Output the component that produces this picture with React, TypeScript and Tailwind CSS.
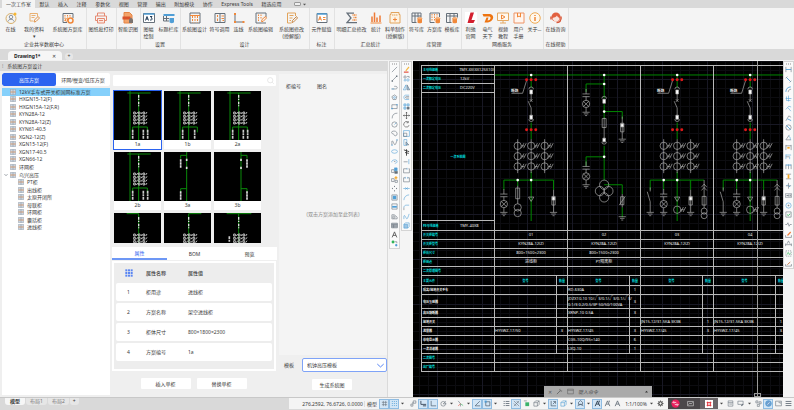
import { Fragment, useState } from 'react';
import type { ReactNode } from 'react';

const O = '#f0883a';
const G = '#66707a';
const B = '#4f9ed6';

function Ic({ children, className = 'size-[12px]' }: { children: ReactNode; className?: string }) {
  return (
    <svg viewBox="0 0 24 24" className={`${className} shrink-0`} fill="none" stroke={G} strokeWidth={2} aria-hidden="true">
      {children}
    </svg>
  );
}

const menus = ['一次工作室', '默认', '插入', '注释', '参数化', '视图', '管理', '输出', '附加模块', '协作', 'Express Tools', '精选应用'];

const db = (
  <>
    <path d="M13 13v8c0 2 9 2 9 0v-8" fill={O} stroke="none" />
    <ellipse cx="17.500" cy="13" rx="4.500" ry="2" fill="#f8b27a" stroke={O} strokeWidth={1} />
  </>
);

type RibbonItem = { lines: string[]; w: string; icon: ReactNode };
type RibbonGroup = { title: string; items: RibbonItem[] };

const ribbon: RibbonGroup[] = [
  {
    title: '企业共享数据中心',
    items: [
      {
        lines: ['在线'], w: 'w-[17px]',
        icon: <><circle cx="12" cy="13" r="10" stroke="#d9b06a" /><circle cx="12" cy="10" r="3.500" stroke="#8a93a0" /><path d="M6 19c1-6 11-6 12 0" stroke="#8a93a0" /><circle cx="20" cy="4" r="3" fill="#f7b733" stroke="none" /></>,
      },
      {
        lines: ['我的资料', '▾'], w: 'w-[30px]',
        icon: <><path d="M19 9V3H4v15h6" stroke="#e9b173" /><path d="M7 7h8M7 11h6" stroke="#e9b173" /><path d="M12 20l1-4 7-7 3 3-7 7z" stroke="#e0924a" /></>,
      },
      {
        lines: ['系统图方案库'], w: 'w-[37px]',
        icon: <><path d="M2 3h20v9M2 3v18h8" stroke={G} /><path d="M6 6v12M11 6v7M16 6v5" stroke={O} strokeDasharray="3 2" /><circle cx="17" cy="17" r="5" stroke={O} strokeWidth={3} /><circle cx="9" cy="16" r="2.500" stroke={O} /></>,
      },
    ],
  },
  {
    title: '',
    items: [{
      lines: ['图纸批打印'], w: 'w-[30px]',
      icon: <><path d="M5 8V2h14v6M5 17H1V8h22v9h-4" stroke="#e58a72" /><path d="M5 13h14v9H5z" stroke="#e58a72" fill="#fbe9e3" /><path d="M8 17h8" stroke="#e58a72" /></>,
    }],
  },
  {
    title: '',
    items: [{
      lines: ['智能识图'], w: 'w-[24px]',
      icon: <><path d="M4 1h11l5 5v16H4z" fill="#f3a46b" stroke="#e58445" /><path d="M1 9h16v6H1z" fill="#d9532c" stroke="none" /><path d="M14 15l4-4 4 4v7h-8z" fill="#7b7370" stroke="none" /></>,
    }],
  },
  {
    title: '设置',
    items: [
      {
        lines: ['图幅', '绘制'], w: 'w-[17px]',
        icon: <><path d="M1 3h22v18H1z" fill="#fff" /><path d="M1 4h22" stroke={B} strokeWidth={3} /><path d="M5 17l3-8 3 8M6 14h4M14 9h4l-2 3c4 0 3 5-2 4" stroke="#27405a" /></>,
      },
      {
        lines: ['标题栏库'], w: 'w-[23px]',
        icon: <><path d="M1 4h22v4H1z" fill={B} stroke="none" /><path d="M1 8v10h11M1 13h11M7 8v10" /><path d="M13 12v8c0 3 9 3 9 0v-8z" fill={B} stroke="none" /></>,
      },
    ],
  },
  {
    title: '设计',
    items: [
      {
        lines: ['系统图设计'], w: 'w-[29px]',
        icon: <><path d="M2 2h20v20H2z" /><path d="M2 7h20" stroke={O} /><path d="M7 8v13M12 8v13M17 8v13" stroke={O} strokeDasharray="4 2" /></>,
      },
      {
        lines: ['符号调用'], w: 'w-[21px]',
        icon: <><path d="M2 3h20v18H2zM12 3v18" /><path d="M7 6v4M7 13v5M15 8h5M15 13h5M17 17h3" stroke={O} /></>,
      },
      { lines: ['连线'], w: 'w-[17px]', icon: <><path d="M4 3v17h17" stroke={G} /><path d="M2 2h4v4H2zM2 18h4v4H2zM19 18h4v4h-4z" fill={O} stroke="none" /></> },
      {
        lines: ['系统图编辑'], w: 'w-[27px]',
        icon: <><path d="M2 2h20v8M2 2v20h20" /><path d="M7 5v13M12 5v9" stroke={O} strokeDasharray="3 2" /><path d="M13 19l1-4 7-6 2 3-7 7z" stroke={O} /></>,
      },
      {
        lines: ['系统图修改', '(授解版)'], w: 'w-[35px]',
        icon: <><path d="M19 8V2H3v20h8" stroke="#e2a45c" /><path d="M7 7h8M7 12h6M7 17h3" stroke="#e2a45c" /><path d="M12 21l1-4 8-8 2 3-8 8z" stroke="#c98a4a" /></>,
      },
    ],
  },
  {
    title: '标注',
    items: [{
      lines: ['元件赋值'], w: 'w-[25px]',
      icon: <><path d="M2 3h20v18H2z" fill="#fff" /><path d="M2 4h20" strokeWidth={3} stroke={B} /><path d="M5 17l3-8 3 8M6 14h4M14 11h5M14 15h5" stroke={O} /></>,
    }],
  },
  {
    title: '汇总统计',
    items: [
      {
        lines: ['明细汇总修改'], w: 'w-[35px]',
        icon: <><path d="M16 2H2l8 10-8 9h20" stroke={G} strokeWidth={2.5} /><path d="M13 6h9M15 11h7M13 16h9" stroke={O} strokeDasharray="2 1" strokeWidth={3} /></>,
      },
      { lines: ['统计'], w: 'w-[14px]', icon: <><path d="M1 22h22" stroke={O} /><path d="M4 20V9M9 20V1M14 20V11M20 20V7" stroke="#ee7a35" strokeWidth={3} /></> },
      {
        lines: ['料单制作', '(授解版)'], w: 'w-[24px]',
        icon: <><path d="M4 1h16v4h2v17H2V5h2z" stroke="#e2a45c" fill="#fdf3e4" /><path d="M6 6h12" stroke="#e2a45c" strokeDasharray="3 1" /><path d="M12 11v8M8 15h8" stroke={O} /></>,
      },
    ],
  },
  {
    title: '库管理',
    items: [
      { lines: ['符号库'], w: 'w-[19px]', icon: <><path d="M2 2h18v9M2 2v19h9M2 8h18M8 2v19M14 2v9" />{db}</> },
      { lines: ['方案库'], w: 'w-[17px]', icon: <><path d="M2 2h19v8M2 2v19h9" /><path d="M6 4v15M11 4v15M16 4v6" stroke={O} strokeDasharray="3 2" />{db}</> },
      { lines: ['模板库'], w: 'w-[18px]', icon: <><path d="M1 3h22v8M1 3v18h10M1 8h22M8 3v18M16 3v8" />{db}</> },
    ],
  },
  {
    title: '网络服务',
    items: [
      { lines: ['利驰', '官网'], w: 'w-[19px]', icon: <><rect width="24" height="24" fill="#fff" stroke="none" /><path d="M11 1h7l-5 15h7l-3 6H5z" fill="#d3202f" stroke="none" /></> },
      { lines: ['电气', '天下'], w: 'w-[15px]', icon: <path d="M1 4h15c10 1 8 16-5 17H5l4-10h4l-2 6c7 0 8-8 3-8H3z" fill="#ee7410" stroke="none" /> },
      { lines: ['视频', '教程'], w: 'w-[16px]', icon: <><path d="M1 2h22v15H1z" stroke="#e5a862" fill="#fff8ee" /><path d="M9 6l7 4-7 4z" stroke={O} /><path d="M12 17v5M6 22h12" stroke="#e5a862" /></> },
      { lines: ['用户', '手册'], w: 'w-[15px]', icon: <><path d="M2 2h20v20H2z" stroke="#ee9467" fill="#fff5ef" /><path d="M9 2v8l3-2 3 2V2" stroke={O} /></> },
      { lines: ['关于…'], w: 'w-[17px]', icon: <><circle cx="12" cy="12" r="10.500" stroke="#eeaa55" fill="#fff8ee" /><path d="M12 6v2M12 10v8" stroke={O} strokeWidth={3} /></> },
    ],
  },
  {
    title: '在线帮助',
    items: [{
      lines: ['在线咨询'], w: 'w-[25px]',
      icon: <><circle cx="12" cy="10" r="9" fill="#e2603f" stroke="none" /><path d="M5 12c4-1 7-2 9-5 1 3 3 4 5 5-1 10-12 10-14 0z" fill="#fbe3dc" stroke="none" /><path d="M2 9v6M22 9v6M21 15c0 4-4 6-8 6" stroke="#d9583a" strokeWidth={3} /></>,
    }],
  },
];

const schemes = ['12kV手车式开关柜国网标准方案', 'HXGN15-12(F)', 'HXGN15A-12(F,R)', 'KYN28A-12', 'KYN28A-12(Z)', 'KYN61-40.5', 'XGN2-12(Z)', 'XGN15-12(F)', 'XGN17-40.5', 'XGN66-12', '环网柜'];
const subSchemes = ['PT柜', '出线柜', '太原开闭所', '母联柜', '环网柜', '囊括柜', '进线柜'];

const thumbs = [
  { kind: '1a', label: '1a' },
  { kind: '1b', label: '1b' },
  { kind: '2a', label: '2a' },
  { kind: '2b', label: '2b' },
  { kind: '3a', label: '3a' },
  { kind: '3b', label: '3b' },
  { kind: '4a', label: '' },
  { kind: '4b', label: '' },
  { kind: '4c', label: '' },
];

const props = [
  ['1', '柜用途', '进线柜'],
  ['2', '方案名称', '架空进线柜'],
  ['3', '柜体尺寸', '800×1800×2300'],
  ['4', '方案编号', '1a'],
];

function TreeIcon() {
  return (
    <Ic className="size-[6px]">
      <path d="M2 1h20v22H2z" fill="#d5dde6" stroke="#8d99a6" />
      <path d="M2 12h20" stroke={O} strokeWidth={3} />
      <path d="M9 1v22M15 1v22" stroke="#8d99a6" />
    </Ic>
  );
}

function Thumb({ kind }: { kind: string }) {
  const tri = [64, 78, 92];
  if (kind[0] === '3') {
    const s = kind === '3a' ? -18 : 18;
    const x = kind === '3a' ? 68 : 81;
    return (
      <svg viewBox="0 0 141 147" preserveAspectRatio="none" className="block h-[49px] w-full bg-black" fill="none" aria-hidden="true">
        <path d={`M${x} 0v147M${x} 10h${s}v10M${x} 110h${s}v10`} stroke="#0a8a0a" strokeWidth={3} />
        <path d={`M${x} 20v8M${x} 44v8M${x + s} 22v26M${x + s} 118v26`} stroke="#ddd" strokeWidth={5} strokeDasharray="7 2" />
      </svg>
    );
  }
  const four = kind[0] === '4';
  const bus: Record<string, string> = { '4a': 'M38 2h36', '4b': 'M74 2h38', '4c': 'M38 2h74' };
  return (
    <svg viewBox="0 0 141 147" preserveAspectRatio="none" className="block h-[49px] w-full bg-black" fill="none" aria-hidden="true">
      <path d={four ? `${bus[kind]}M74 2v145` : 'M40 6h70M48 0v147M74 6v141M56 124v-16h44v16'} stroke="#0a8a0a" strokeWidth={3} />
      <path d="M74 12v34" stroke="#ddd" strokeWidth={4} strokeDasharray="8 3 4 5" />
      {tri.map(x => (
        <g key={x} stroke="#bbb" strokeWidth={3}>
          {[66, 76, 86, 96].map(y => <path key={y} d={`M${x - 5} ${y - 3}h5v6h-5zM${x + 3} ${y + 3}l4-6`} />)}
        </g>
      ))}
      {kind === '4c' && <path d="M46 70v18" stroke="#ccc" strokeWidth={5} strokeDasharray="9 2 5 2" />}
      {!four && <path d={kind === '1b' ? 'M56 116v28M92 116v28' : 'M56 116v28M88 116v28M101 116v28'} stroke="#ccc" strokeWidth={5} strokeDasharray="9 2 5 2" />}
    </svg>
  );
}

// schematic symbols, drawn in a 219x493 cabinet cell
const green = '#008a00';

function Lamp({ x, y }: { x: number; y: number }) {
  return (
    <g>
      <path d={`M${x} ${y - 45}v15M${x - 11} ${y - 30}h22M${x - 11} ${y - 22}h22M${x} ${y - 22}v12M${x} ${y + 11}v14`} />
      <circle cx={x} cy={y} r="11" />
      <path d={`M${x - 8} ${y - 8}l16 16M${x + 8} ${y - 8}l-16 16`} />
      <Ground x={x} y={y + 25} />
    </g>
  );
}

function Ground({ x, y }: { x: number; y: number }) {
  return <path d={`M${x - 11} ${y}h22M${x - 7} ${y + 5}h14M${x - 3} ${y + 10}h6`} />;
}

function Arrester({ x, y }: { x: number; y: number }) {
  return (
    <g>
      <path d={`M${x} ${y - 22}v68M${x - 5} ${y - 2}h10v26h-10z`} />
      <path d={`M${x - 4} ${y}h8v9h-8z`} fill="#fff" />
      <Ground x={x} y={y + 46} />
    </g>
  );
}

function Reds({ y }: { y: number }) {
  return <g fill="#e01818" stroke="none">{[96, 110, 124].map(x => <circle key={x} cx={x} cy={y} r="4.500" />)}</g>;
}

function Dot({ x, y }: { x: number; y: number }) {
  return <circle cx={x} cy={y} r="4" fill="#fff" stroke="none" />;
}

function Breaker() {
  return (
    <g>
      <path d="M110 27v38M110 170v50M110 318v148" stroke={green} strokeWidth={3} />
      <path d="M96 44L84 82H50" />
      <text x="49" y="79" fill="#eee" stroke="none" fontSize="11" fontWeight="bold">断路</text>
      <path d="M103 70a7 7 0 0 1 14 0M103 160a7 7 0 0 0 14 0M110 84v20M106 100l8 8M114 100l-8 8M101 106l9 20v22" />
      <path d="M106 72h8v12h-8zM106 148h8v12h-8z" fill="#fff" />
      <Reds y={41} />
      <Reds y={192} />
      {[69, 110, 151].map(x => (
        <g key={x}>
          <path d={`M${x} 220v102`} />
          {[240, 271, 302].map(y => (
            <g key={y}>
              <circle cx={x} cy={y} r="11" />
              <path d={`M${x + 11} ${y}h9M${x + 11} ${y + 7}l8-15M${x + 18} ${y + 7}l8-15`} />
            </g>
          ))}
        </g>
      ))}
      <Dot x={110} y={27} />
      <path d="M102 394h16l-8 13z" />
    </g>
  );
}

function Cabinet({ kind }: { kind: 'line' | 'pt' | 'feeder' }) {
  return (
    <svg viewBox="0 0 219 493" preserveAspectRatio="none" className="block h-[164px] w-full" fill="none" stroke="#b5b5b5" strokeWidth={2} aria-hidden="true">
      <path d="M0 27h219" stroke={green} strokeWidth={3} />
      {kind !== 'pt' && <Breaker />}
      {kind === 'line' && (
        <g>
          <path d="M27 372v-29h151v29M69 343v18" stroke={green} strokeWidth={3} />
          <Lamp x={27} y={415} />
          <path d="M69 360v54M63 367h12v32H63z" />
          <circle cx="69" cy="425" r="11" />
          <circle cx="69" cy="442" r="11" />
          <Arrester x={178} y={394} />
          <Dot x={69} y={343} />
          <Dot x={110} y={343} />
        </g>
      )}
      {kind === 'feeder' && (
        <g>
          <path d="M28 372v-29h164M69 343v29M151 343v29" stroke={green} strokeWidth={3} />
          <path d="M28 365v12M19 378l9 30v32" />
          <Ground x={28} y={440} />
          <Lamp x={69} y={415} />
          <circle cx="110" cy="432" r="11" />
          <path d="M121 432h9M121 439l8-15M128 439l8-15" />
          <Arrester x={151} y={394} />
          <path d="M192 343v84M184 364l8-9 8 9M184 374l8-9 8 9M186 392h12v26h-12z" />
          <circle cx="192" cy="436" r="9" />
          <circle cx="192" cy="450" r="9" />
          <Dot x={69} y={343} />
          <Dot x={110} y={343} />
        </g>
      )}
      {kind === 'pt' && (
        <g>
          <path d="M110 27v70M110 54H55v24M55 300v-27h55M110 115v43M110 137h55v22M110 240v103M110 357h55v28M165 425v30" stroke={green} strokeWidth={3} />
          <Lamp x={55} y={114} />
          <Lamp x={55} y={332} />
          <path d="M103 98a7 7 0 0 1 14 0M104 158h12v27h-12zM110 155v62M103 228a7 7 0 0 0 14 0" />
          <path d="M106 100h8v12h-8zM106 217h8v11h-8z" fill="#fff" />
          <Arrester x={165} y={174} />
          <circle cx="110" cy="357" r="14" />
          <circle cx="97" cy="376" r="14" />
          <circle cx="123" cy="376" r="14" />
          <circle cx="110" cy="395" r="14" />
          <path d="M160 393h10v24h-10zM156 418l18-26M165 385v40" />
          <Ground x={165} y={453} />
          <Dot x={110} y={27} />
          <Dot x={110} y={54} />
          <Dot x={110} y={137} />
          <Dot x={110} y={273} />
        </g>
      )}
    </svg>
  );
}

const info = [
  ['开关柜编号', '01', '02', '03', '04'],
  ['开关柜型号', 'KYN28A-12(Z)', 'KYN28A-12(Z)', 'KYN28A-12(Z)', 'KYN28A-12(Z)'],
  ['柜体尺寸', '800×1500×2300', '800×1500×2300', '', ''],
  ['柜用途', '进线柜', 'PT隔离柜', '', ''],
  ['二次原理图号', '', '', '', ''],
];

const parts = [
  { name: '隔离/接地开关手车', cells: ['', '', 'RD-630A', '1', '', '', '', ''] },
  { name: '电压互感器', cells: ['', '', 'JDZX10-10 10/√3/0.1/√3/0.1/√3/|0.1/3 0.2/0.5/3P 50/50/100VA', '3', '', '', '', ''], tall: true },
  { name: '高压熔断器', cells: ['', '', 'XRNP-10 0.5A', '3', '', '', '', ''] },
  { name: '接地开关', cells: ['', '', '', '', 'JN15-12/31.5KA 3K3B', '1', 'JN15-12/31.5KA 3K3B', '1'] },
  { name: '避雷器', cells: ['HY5WZ-17/50', '3', 'HY5WZ-17/45', '3', 'HY5WZ-17/45', '3', 'HY5WZ-17/45', '3'] },
  { name: '带电显示器', cells: ['', '', 'CG5-10Q/95×140', '6', '', '', '', ''] },
  { name: '一次消谐器', cells: ['', '', 'LXQ-10', '1', '', '', '', ''] },
];

const line = 'border border-[#b8b8b8] p-0';
const th = `${line} pl-[1px] text-left text-[3px] font-bold text-[#00e0e0]`;
const thMid = `${line} text-center text-[3px] font-bold text-[#00e0e0]`;
const td = `${line} font-normal`;

function Spec({ name, value }: { name: string; value: string }) {
  return (
    <div className="flex">
      <span className="w-[37px]">{name}</span>
      <span className="text-[4px] font-normal text-[#eee]">{value}</span>
    </div>
  );
}

function Bom() {
  return (
    <table className="w-[366px] table-fixed border-collapse text-[4px] leading-[6px] whitespace-nowrap text-[#eee]">
      <colgroup>
        <col className="w-[73px]" />
        {[0, 1, 2, 3].map(i => <Fragment key={i}><col className="w-[62px]" /><col className="w-[11px]" /></Fragment>)}
      </colgroup>
      <tbody>
        <tr className="h-[9px]">
          <th className={th}><Spec name="主母线规格" value="TMY-3X(3X125X10)" /></th>
          {(['line', 'pt', 'feeder', 'feeder'] as const).map((k, i) => (
            <td key={i} rowSpan={5} colSpan={2} className={td}><Cabinet kind={k} /></td>
          ))}
        </tr>
        <tr className="h-[9px]"><th className={th}><Spec name="一次额定电压" value="12kV" /></th></tr>
        <tr className="h-[9px]"><th className={th}><Spec name="二次额定电压" value="DC220V" /></th></tr>
        <tr className="h-[128px]"><th className={thMid}>一次系统图</th></tr>
        <tr className="h-[10px]"><th className={th}><Spec name="PE母线规格" value="TMY-40X8" /></th></tr>
        {info.map(r => (
          <tr key={r[0]} className="h-[9px]">
            <th className={th}>{r[0]}</th>
            {r.slice(1).map((c, i) => <td key={i} colSpan={2} className={`${td} text-center`}>{c}</td>)}
          </tr>
        ))}
        <tr className="h-[10px]">
          <th className={th}>主要元件</th>
          {[0, 1, 2, 3].map(i => (
            <Fragment key={i}>
              <th className={thMid}>型号</th>
              <th className={thMid}>数量</th>
            </Fragment>
          ))}
        </tr>
        {parts.map(p => (
          <tr key={p.name} className={p.tall ? 'h-[14px]' : 'h-[9px]'}>
            <th className={`${line} pl-[1px] text-left text-[3px] font-bold text-white`}>{p.name}</th>
            {p.cells.map((c, i) => (
              <td key={i} className={i % 2 ? `${td} text-center` : td}>
                {c.split('|').map(l => <div key={l}>{l}</div>)}
              </td>
            ))}
          </tr>
        ))}
        {['二次图号', '出厂编号'].map(n => (
          <tr key={n} className="h-[9px]">
            <th className={th}>{n}</th>
            {[0, 1, 2, 3].map(i => <td key={i} colSpan={2} className={td} />)}
          </tr>
        ))}
      </tbody>
    </table>
  );
}

const drawTools: ReactNode[] = [
  <path d="M3 21L21 3" />,
  <><path d="M5 19L19 5" /><path d="M2 18h5v5H2zM17 2h5v5h-5z" fill={G} stroke="none" /></>,
  <><path d="M2 17h14c7 0 7-9 0-9h-5" /><path d="M2 17h9" stroke={B} /></>,
  <><path d="M12 3l8 6-3 10H7L3 9z" /><circle cx="12" cy="12" r="3" stroke={B} /></>,
  <><path d="M3 6h18v13H3z" /><path d="M1 19h5M18 6h5" stroke={B} strokeWidth={4} /></>,
  <path d="M4 22C4 10 10 4 22 4" />,
  <><circle cx="12" cy="12" r="9" /><path d="M12 12l6-6" stroke={B} /></>,
  <path d="M4 5c8-4 17 0 17 8s-8 8-10 5 0-4-5-5-5-6-2-8z" />,
  <><path d="M3 21V8c4-8 8 20 13 9 3-5 3-9 5-14" /><path d="M1 21h5M18 3h5" stroke={B} strokeWidth={3} /></>,
  <ellipse cx="12" cy="12" rx="10" ry="6" stroke={B} />,
  <><path d="M3 15C-1 5 22 3 21 12c0 4-4 6-8 6" stroke={B} /><path d="M10 12h5" /></>,
  <><path d="M2 9h9v10H2z" /><path d="M12 3h9v10h-9z" fill={B} stroke={B} /><path d="M13 15h9v7h-9z" fill={G} /></>,
  <><path d="M2 9h9v10H2zM14 15h8v7h-8z" /><path d="M17 1v11M12 6h10" stroke="#f5a623" strokeWidth={4} /></>,
  <path d="M12 3v4M5 10v4M19 10v4M12 18v4" strokeWidth={3} />,
  <><path d="M3 3h18v18H3z" /><path d="M7 7h10v10H7z" fill={B} stroke={B} /></>,
  <><path d="M3 3h18v18H3z" /><path d="M4 10h16v6H4z" fill={B} stroke="none" /></>,
  <><path d="M3 20V6h8l10 8v6z" /><circle cx="10" cy="14" r="4" /></>,
  <><path d="M2 4h20v16H2z" fill="#b9bec4" /><path d="M2 9h20M2 14h20M9 9v11" /></>,
  <path d="M4 22L12 3l8 19M7 15h10" stroke="#555" strokeWidth={3} />,
  <><circle cx="7" cy="7" r="5" fill="#2fb457" stroke="none" /><path d="M13 6h7v5" /><circle cx="18" cy="18" r="4" fill={B} stroke="none" /></>,
];

const editTools: ReactNode[] = [
  <><path d="M8 15L19 2l3 3-11 13z" fill="#f5b942" stroke="none" /><path d="M3 21h16" stroke="#e04b3a" strokeWidth={4} /></>,
  <><circle cx="7" cy="7" r="4" /><circle cx="17" cy="17" r="4" stroke={B} /><circle cx="7" cy="18" r="3" stroke={B} /><path d="M14 5h7v5" /></>,
  <><path d="M10 3v17H1z" stroke={B} /><path d="M14 3v17h9z" fill="#9dc4e2" /></>,
  <><path d="M21 4H9c-8 0-8 15 0 15h12" stroke={B} /><path d="M21 9H11c-3 0-3 5 0 5h10" /></>,
  <><path d="M3 3h7v7H3zM14 3h7v7h-7zM3 14h7v7H3z" stroke={B} fill="#c4dff1" /><path d="M14 14h7v7h-7z" fill={G} /></>,
  <path d="M12 1v22M1 12h22M9 4l3-3 3 3M9 20l3 3 3-3M4 9l-3 3 3 3M20 9l3 3-3 3" stroke="#333" />,
  <path d="M18 4A9.500 9.500 0 1 0 21 14M18 0v6h-6" stroke="#444" />,
  <><path d="M2 2h20v20H2z" stroke={B} /><path d="M2 11h11v11H2z" /></>,
  <><path d="M3 2h10v20H3z" stroke={B} /><path d="M10 10l10 10H10z" fill="#9dc4e2" /></>,
  <><path d="M3 3l18 6M12 1v22M7 12l13 3" stroke="#333" strokeWidth={3} /></>,
  <><path d="M2 13h14" /><path d="M20 4v17" stroke={B} /></>,
  <><path d="M2 6h12M2 6v14h20V6h-3" /><path d="M14 3v6" stroke={B} /></>,
  <><path d="M8 6H2v14h20V6h-6" /><path d="M8 3v6M16 3v6" stroke={B} /></>,
  <path d="M1 12h22M8 8l4 4-4 4M16 8l-4 4 4 4" stroke={B} />,
  <path d="M3 21c0-10 8-18 18-18" stroke={B} />,
  <><path d="M3 21V12" /><path d="M3 12c0-5 4-8 9-8h9" stroke={B} /></>,
  <path d="M3 21V10c5-7 8 18 13 7 3-6 3-9 5-14" stroke={B} />,
  <><path d="M3 8h13v13H3z" stroke={B} fill="#9dc4e2" /><path d="M3 8l5-5h13v13l-5 5" stroke={B} /></>,
];

const dimTools: ReactNode[] = [
  <><path d="M3 3v18M21 3v18" /><path d="M3 12h18" stroke={B} strokeWidth={3} /></>,
  <><path d="M5 5l14 14" stroke={B} strokeWidth={3} /><path d="M2 8l6-6M16 22l6-6" /></>,
  <><path d="M3 20C3 10 10 3 20 3" stroke={B} strokeWidth={3} /><path d="M11 21c0-6 4-10 10-10" /></>,
  <path d="M12 2v20M2 12h20M5 5v14h14" stroke={B} />,
  <><path d="M3 15L13 4l8 3M10 9l10 12" stroke={B} /></>,
  <><path d="M3 20L13 3l8 5" /><path d="M8 13l13 6" stroke={B} strokeWidth={3} /></>,
  <><circle cx="12" cy="12" r="9" /><path d="M5 5l14 14" stroke={B} strokeWidth={3} /></>,
  <><path d="M3 20h18M3 20L15 3" /><path d="M12 7c5 2 7 7 6 13" stroke={B} /></>,
  <><path d="M3 3v18M21 3v18M3 6h18" /><path d="M8 13h8" stroke="#f5a623" strokeWidth={6} /></>,
  <><path d="M3 5v16M3 7h18M16 13v8" stroke={B} /><path d="M3 13h13" /></>,
  <><path d="M3 5v16M12 5v16M21 5v16" /><path d="M3 7h18" stroke={B} strokeWidth={3} /></>,
  <><path d="M3 4h18M3 20h18" /><path d="M12 5v14" stroke="#f5a623" strokeWidth={6} /></>,
  <><path d="M3 13h18M12 3v20" /><path d="M6 13l4-4M18 13l-4 4" stroke={B} strokeWidth={3} /></>,
  <><path d="M1 6h22v12H1z" /><path d="M5 12h6M13 9v6M18 9v6" strokeWidth={3} /></>,
  <><circle cx="12" cy="12" r="9" stroke={B} /><path d="M12 9v6M9 12h6" /></>,
  <><path d="M3 3h18v18H3z" /><path d="M7 12l4 4 7-7" stroke="#2fb457" strokeWidth={3} /></>,
  <path d="M1 12h6l3-6 4 12 3-6h6" />,
  <><path d="M2 14v8h20v-8" /><path d="M7 14L18 2l3 3L10 17z" fill="#f07f3c" stroke="none" /></>,
  <><path d="M2 16h20M7 13l5-10 5 10M2 12v9M22 12v9" /></>,
  <><path d="M3 3h18v18H3z" strokeDasharray="4 3" /><path d="M7 16l4-8 4 8 4-6" stroke="#2fb457" /></>,
  <><path d="M2 14v7h20v-7" /><path d="M8 16l10-9" stroke="#c0703c" strokeWidth={3} /></>,
];

function ToolColumn({ tools, h, label }: { tools: ReactNode[]; h: string; label: string }) {
  return (
    <div role="toolbar" aria-label={label} className={`${h} flex w-[11px] flex-col items-stretch border border-[#d4d4d4] bg-[#fafafa]`}>
      <div className="mx-auto mt-[1px] h-[2px] w-[5px] border-y border-dotted border-[#c4c4c4]" />
      {tools.map((t, i) => (
        <button key={i} aria-label={`${label} ${i + 1}`} className="flex min-h-0 flex-1 items-center justify-center">
          <Ic className="size-[7px]">{t}</Ic>
        </button>
      ))}
    </div>
  );
}

function Caret() {
  return (
    <button aria-label="更多" className="flex w-[7px] items-center justify-center">
      <Ic className="size-[3px]"><path d="M0 5h24L12 19z" fill="#444" stroke="none" /></Ic>
    </button>
  );
}

function StatusButton({ children, on, label }: { children: ReactNode; on?: boolean; label: string }) {
  return (
    <button aria-label={label} aria-pressed={!!on} className={on ? 'flex h-[10px] w-[10px] items-center justify-center border border-[#8fbce2] bg-[#d3e6f6]' : 'flex h-[10px] w-[10px] items-center justify-center'}>
      <Ic className="size-[7px]">{children}</Ic>
    </button>
  );
}

const cube = <path d="M3 9l6-6h12v12l-6 6H3zM3 9h12v12M15 9l6-6" />;

function StatusBar() {
  return (
    <footer className="flex h-[13px] shrink-0 items-start border-t border-[#c8c8c8] bg-[#d9d9d9]">
      <div className="flex w-[289px] shrink-0 items-center pl-[5px]">
        <button className="h-[7px] rounded-b-[3px] bg-[#f6f6f6] px-[5px] leading-[7px] font-bold">模型</button>
        <button className="ml-[1px] h-[7px] rounded-b-[3px] bg-[#e6e6e6] px-[4px] leading-[7px] text-[#777]">布局1</button>
        <button className="ml-[1px] h-[7px] rounded-b-[3px] bg-[#e6e6e6] px-[4px] leading-[7px] text-[#777]">布局2</button>
        <button className="ml-[1px] h-[7px] rounded-b-[3px] bg-[#e6e6e6] px-[3px] leading-[7px]">+</button>
      </div>
      <div className="flex h-[11px] min-w-0 flex-1 items-center bg-[#f4f4f4]">
        <span className="w-[76px] border-r border-[#ddd] pr-[1px] text-right whitespace-nowrap">276.2592, 76.6726, 0.0000</span>
        <button className="w-[14px]">模型</button>
        <StatusButton on label="栅格"><path d="M3 8h18M3 16h18M8 3v18M16 3v18" /></StatusButton>
        <StatusButton on label="捕捉"><path d="M3 5h18M3 12h18M3 19h18" strokeDasharray="3 4" strokeWidth={3} stroke={B} /></StatusButton>
        <Caret />
        <div className="ml-[2px] flex items-center">
          <StatusButton label="推断约束"><path d="M3 14h7v7H3zM11 3h9v8h-9zM10 14V7" /></StatusButton>
          <StatusButton on label="动态输入"><path d="M3 3v12h18M10 20h11" stroke="#345" strokeWidth={3} /></StatusButton>
          <StatusButton on label="正交"><path d="M4 3v17h17" stroke="#345" /></StatusButton>
          <StatusButton label="极轴"><circle cx="11" cy="13" r="8" /><path d="M11 13l9-9M11 13h11" /></StatusButton>
          <Caret />
          <StatusButton label="等轴测"><path d="M4 3l8 10v9" /><path d="M12 13l9 6" stroke="#2fb457" /><path d="M12 13L4 20" stroke="#e04b3a" /></StatusButton>
          <Caret />
          <StatusButton on label="对象追踪"><path d="M4 20L20 4M4 20h17" stroke="#345" /></StatusButton>
          <StatusButton on label="对象捕捉"><path d="M6 6h14v14H6z" stroke="#345" /><path d="M2 2h7v7H2z" fill={B} stroke="none" /></StatusButton>
          <Caret />
        </div>
        <div className="ml-[2px] flex items-center">
          <StatusButton label="线宽"><path d="M9 5h13M9 12h13M9 19h13M2 5h4M2 12h4M2 19h4" strokeWidth={3} /></StatusButton>
          <StatusButton on label="透明度"><path d="M3 3l18 18M12 3l9 9M3 12l9 9M21 3L3 21" /></StatusButton>
          <StatusButton label="选择循环"><path d="M8 8h13v13H8z" fill="#3bb36b" stroke="none" /><path d="M3 3h10" /></StatusButton>
          <StatusButton label="三维捕捉">{cube}</StatusButton>
          <Caret />
          <StatusButton on label="动态UCS"><path d="M4 3v17h17M10 14l8-8M11 5h8v8" stroke="#345" /></StatusButton>
          <StatusButton label="过滤"><g stroke={B}>{cube}</g></StatusButton>
          <Caret />
          <StatusButton on label="小控件"><path d="M12 2l7 6v7H5V8zM2 20l10-5 10 5" stroke="#345" /></StatusButton>
          <Caret />
          <StatusButton on label="注释可见"><path d="M4 21l8-18 8 18M8 14h9M18 2v6" stroke="#234" strokeWidth={3} /></StatusButton>
          <StatusButton label="自动缩放"><path d="M4 21l8-18 8 18M8 14h9M18 2v6" strokeWidth={3} /></StatusButton>
          <StatusButton label="注释比例"><path d="M4 21l8-18 8 18M8 14h9" strokeWidth={3} /></StatusButton>
          <button className="ml-[2px] w-[24px] whitespace-nowrap">1:1/100%</button>
          <Caret />
          <StatusButton label="设置"><circle cx="12" cy="12" r="6" strokeWidth={4} stroke="#444" /><path d="M12 1v5M12 18v5M1 12h5M18 12h5M4 4l4 4M16 16l4 4M20 4l-4 4M8 16l-4 4" stroke="#444" /></StatusButton>
        </div>
        <div className="ml-[3px] flex h-[11px] w-[50px] shrink-0 items-center justify-between bg-[#4b474a] pl-[3px]">
          <Ic className="size-[9px]"><circle cx="12" cy="12" r="11" fill="#ea1f5c" stroke="none" /><path d="M6 9h8M8 6L5 9l3 3M18 15h-8M16 12l3 3-3 3" stroke="#fff" /></Ic>
          <Ic className="size-[7px]"><path d="M2 5h20v15H2z" fill="#4b474a" stroke="#ddd" /><path d="M5 16l5-6 4 4 5-6" stroke="#ddd" /></Ic>
          <span className="flex h-full w-[18px] items-center justify-center bg-[#6a6669]">
            <Ic className="size-[8px]"><path d="M0 0h24v24H0z" fill="#fff" stroke="none" /><path d="M5 8h14M8 5v14M16 5v14M5 16h14" stroke="#e0343c" strokeWidth={3} /></Ic>
          </span>
        </div>
        <div className="flex min-w-0 flex-1 items-center justify-between">
          <Caret />
          <StatusButton label="快捷特性"><path d="M4 3h16v18H4zM4 9h16M8 14h9" /></StatusButton>
          <StatusButton label="隔离对象"><path d="M3 4h18v11H3z" /><path d="M15 20l6-6" strokeWidth={4} /></StatusButton>
          <Caret />
          <StatusButton label="硬件加速"><path d="M3 3h7v7H3zM14 6h7v7h-7zM8 15h7v7H8z" /></StatusButton>
          <StatusButton on label="云同步"><circle cx="12" cy="12" r="10" fill="#6d9fd0" stroke={B} /><path d="M8 16l8-8" stroke="#fff" /></StatusButton>
          <StatusButton label="全屏"><path d="M2 4h20v16H2zM12 8h6v5" /></StatusButton>
          <StatusButton label="自定义"><path d="M2 5h20M2 12h20M2 19h20" strokeWidth={3} /></StatusButton>
        </div>
      </div>
    </footer>
  );
}

export default function App() {
  const [template, setTemplate] = useState('机钟高压模板');
  const [current, setCurrent] = useState('1a');

  return (
    <div className="flex h-screen w-full flex-col overflow-hidden bg-[#efefef] font-['Noto_Sans','Noto_Sans_CJK_SC',sans-serif] text-[5px] leading-[6px] text-[#3a3a3a]">
      <nav className="h-[8px] shrink-0 bg-[#d9d9d9] pl-[2px]">
        <div className="flex h-full w-[304px] justify-between">
          {menus.map((m, i) => (
            <button key={m} className={i === 0 ? 'bg-[#f4f4f4] px-[4px] whitespace-nowrap' : 'px-[4px] whitespace-nowrap'}>{m}</button>
          ))}
          <button aria-label="功能区选项" className="flex items-center gap-[2px] pl-[8px]">
            <span className="h-[4px] w-[7px] rounded-[1px] border border-[#999] bg-[#eee]" />
            <Ic className="size-[3px]"><path d="M0 5h24L12 19z" fill="#555" stroke="none" /></Ic>
          </button>
        </div>
      </nav>

      {/* Ribbon */}
      <div className="flex h-[41px] shrink-0 bg-[#f4f4f4] pl-[2px]">
        {ribbon.map((g, gi) => (
          <section key={gi} className="-mr-px flex flex-col border-r border-[#e2e2e2]">
            <div className="flex flex-1 pt-[4px]">
              {g.items.map(it => (
                <button key={it.lines[0]} className={`${it.w} flex flex-col items-center whitespace-nowrap`}>
                  <Ic>{it.icon}</Ic>
                  <span className="mt-[2px] leading-[7px]">{it.lines[0]}</span>
                  {it.lines[1] && <span className="leading-[7px]">{it.lines[1]}</span>}
                </button>
              ))}
            </div>
            <div className="h-[8px] text-center leading-[7px]">{g.title}</div>
          </section>
        ))}
      </div>

      <div className="flex h-[12px] shrink-0 items-end border-b border-[#f2f2f2] bg-[#d9d9d9] pl-[8px]">
        <div className="flex h-[9px] w-[54px] items-center justify-between rounded-t-[4px] bg-[#f6f6f6] px-[6px]">
          <span className="font-bold text-[#222]">Drawing1*</span>
          <button aria-label="关闭">✕</button>
        </div>
        <button aria-label="新建" className="ml-[3px] h-[7px] w-[8px] rounded-[3px] bg-[#e6e6e6] leading-[7px]">+</button>
      </div>

      <div className="flex min-h-0 flex-1">
        {/* Docked design panel */}
        <div className="flex w-[388px] shrink-0 flex-col border-r border-[#dadada]">
          <h1 className="h-[10px] shrink-0 bg-[#d9d9d9] pl-[2px] leading-[10px]"><span className="mr-[4px] text-[#888]">⁞</span>系统图方案设计</h1>
          <div className="flex min-h-0 flex-1">
            <aside className="flex w-[110px] shrink-0 flex-col py-[2px] pl-[2px]">
              <div className="flex h-[13px] shrink-0 overflow-hidden rounded-[2px] bg-white">
                <button className="w-[54px] rounded-[2px] bg-[#2b63f0] text-white">高压方案</button>
                <button className="flex-1">环网/慢变/低压方案</button>
              </div>
              <div className="mt-[2px] flex-1 bg-white">
                <ul className="grid h-[143px] auto-rows-fr">
                  {schemes.map((s, i) => (
                    <li key={s} className={i === 0 ? 'flex bg-[#85d0fb]' : 'flex'}>
                      <button className="flex flex-1 items-center gap-[3px] pl-[8px] text-left"><TreeIcon />{s}</button>
                    </li>
                  ))}
                  <li className="flex">
                    <button aria-expanded="true" className="flex flex-1 items-center pl-[2px] text-left">
                      <Ic className="mr-[2px] size-[4px]"><path d="M3 7l9 9 9-9" strokeWidth={4} /></Ic>
                      <TreeIcon /><span className="pl-[3px]">乌兴高压</span>
                    </button>
                  </li>
                  {subSchemes.map(s => (
                    <li key={s} className="flex">
                      <button className="flex flex-1 items-center gap-[3px] pl-[16px] text-left"><TreeIcon />{s}</button>
                    </li>
                  ))}
                </ul>
              </div>
            </aside>

            <section className="flex w-[167px] shrink-0 flex-col pt-[4px] pl-[2px]">
              <label className="mx-[1px] flex h-[11px] shrink-0 items-center rounded-[1px] bg-white pr-[2px]">
                <input aria-label="搜索方案" className="min-w-0 flex-1 bg-transparent px-[2px] outline-none" />
                <Ic className="size-[7px]"><circle cx="11" cy="11" r="9" stroke="#d8d8d8" /><path d="M18 18l5 5" stroke="#d8d8d8" /></Ic>
              </label>
              <div className="mt-[4px] ml-[1px] grid h-[153px] w-[149px] shrink-0 grid-cols-3 content-start gap-[1px] overflow-hidden">
                {thumbs.map(t => (
                  <button
                    key={t.kind}
                    aria-label={`方案 ${t.kind}`}
                    onClick={() => setCurrent(t.kind)}
                    className={t.kind === current ? 'flex h-[60px] flex-col border border-[#2b63f0] bg-white' : 'flex h-[60px] flex-col border border-[#efefef] bg-white'}
                  >
                    <Thumb kind={t.kind} />
                    {t.label && <span className="w-full text-center leading-[9px]">{t.label}</span>}
                  </button>
                ))}
              </div>
              <div className="mt-[4px] grid h-[13px] shrink-0 grid-cols-3 bg-white" role="tablist">
                <button role="tab" aria-selected="true" className="border-b-2 border-[#6d97f5] text-[#2b63f0]">属性</button>
                <button role="tab" aria-selected="false">BOM</button>
                <button role="tab" aria-selected="false">预览</button>
              </div>
              <div className="mt-[1px] mr-[1px] h-[110px] shrink-0 border-2 border-white bg-[#ededed] px-[2px]">
                <table className="w-full table-fixed border-separate border-spacing-x-0 border-spacing-y-[2px] text-left">
                  <thead>
                    <tr className="h-[16px]">
                      <th className="w-[30px] p-0">
                        <Ic className="ml-[9px] size-[8px]">
                          <g fill="#5b86f2" stroke="none">
                            {[1, 9, 17].map(x => [1, 9, 17].map(y => <rect key={`${x}-${y}`} x={x} y={y} width="6" height="6" />))}
                          </g>
                        </Ic>
                      </th>
                      <th className="w-[42px] p-0 font-medium">属性名称</th>
                      <th className="p-0 font-medium">属性值</th>
                    </tr>
                  </thead>
                  <tbody>
                    {props.map(p => (
                      <tr key={p[0]} className="h-[18px]">
                        <td className="rounded-l-[2px] bg-white p-0 pr-[5px] text-center">{p[0]}</td>
                        <td className="bg-white p-0">{p[1]}</td>
                        <td className="rounded-r-[2px] bg-white p-0">{p[2]}</td>
                      </tr>
                    ))}
                  </tbody>
                </table>
              </div>
              <div className="mt-[7px] flex justify-center gap-[6px] pr-[2px]">
                <button className="h-[11px] w-[50px] rounded-[1px] bg-white">插入单柜</button>
                <button className="h-[11px] w-[50px] rounded-[1px] bg-white">替换单柜</button>
              </div>
            </section>

            <section className="flex min-w-0 flex-1 flex-col pt-[3px] pl-[2px]">
              <div className="flex h-[281px] shrink-0 flex-col bg-[#f4f4f4]">
                <div className="flex gap-[16px] pt-[9px] pl-[7px]">
                  <span>柜编号</span>
                  <span>图名</span>
                </div>
                <p className="pt-[122px] text-center text-[#888]">(双击方案添加至此列表)</p>
              </div>
              <div className="mt-[3px] flex items-center pl-[5px]">
                <label htmlFor="tpl" className="w-[18px]">模板</label>
                <div className="relative flex-1">
                  <select
                    id="tpl"
                    value={template}
                    onChange={e => setTemplate(e.target.value)}
                    className="h-[14px] w-full appearance-none rounded-[2px] border border-[#7fa3f7] bg-white pl-[4px]"
                  >
                    <option>机钟高压模板</option>
                    <option>标准高压模板</option>
                  </select>
                  <Ic className="pointer-events-none absolute top-[4px] right-[3px] size-[7px]"><path d="M1 7l11 10L23 7" stroke="#3f73f2" strokeWidth={3} /></Ic>
                </div>
              </div>
              <button className="mt-[7px] ml-[33px] h-[11px] w-[40px] rounded-[1px] bg-white">生成系统图</button>
            </section>
          </div>
        </div>

        <div className="flex w-[25px] shrink-0 items-start gap-[1px] bg-[#f4f4f4] pl-[1px]">
          <ToolColumn tools={drawTools} h="h-[188px]" label="绘图" />
          <ToolColumn tools={editTools} h="h-[170px]" label="修改" />
        </div>

        {/* Drawing canvas */}
        <main className="relative min-w-0 flex-1 overflow-hidden bg-black bg-[linear-gradient(to_right,#181824_1px,transparent_1px),linear-gradient(to_bottom,#181824_1px,transparent_1px),linear-gradient(to_right,#0c0c10_1px,transparent_1px),linear-gradient(to_bottom,#0c0c10_1px,transparent_1px)] bg-[size:45px_45px,45px_45px,9px_9px,9px_9px] bg-[position:24px_18px,24px_18px,6px_0px,6px_0px] pt-[4px] pl-[8px]">
          <Bom />
          <div className="absolute inset-y-0 right-[25px] w-px bg-[#9a9a9a]" />
          <div className="absolute right-[22px] bottom-0 h-[4px] w-[7px] border border-[#9a9a9a]" />
          <div className="absolute bottom-0 left-[131px] flex h-[11px] w-[108px] items-center gap-[4px] bg-[#aaa] px-[4px] text-[#555]">
            <button aria-label="关闭命令行">✕</button>
            <Ic className="size-[7px]"><path d="M3 21L15 9M14 3c-3 4 2 10 7 7" stroke="#666" strokeWidth={3} /></Ic>
            <Ic className="size-[7px]"><path d="M2 4h20v16H2zM2 8h20" stroke="#666" /></Ic>
            <input aria-label="命令" placeholder="键入命令" className="min-w-0 flex-1 bg-transparent italic outline-none placeholder:text-[#555]" />
            <Ic className="size-[3px]"><path d="M0 19h24L12 5z" fill="#333" stroke="none" /></Ic>
          </div>
        </main>

        <div className="w-[11px] shrink-0 bg-[#f4f4f4]">
          <ToolColumn tools={dimTools} h="h-[208px]" label="标注" />
        </div>
      </div>

      <StatusBar />
    </div>
  );
}
